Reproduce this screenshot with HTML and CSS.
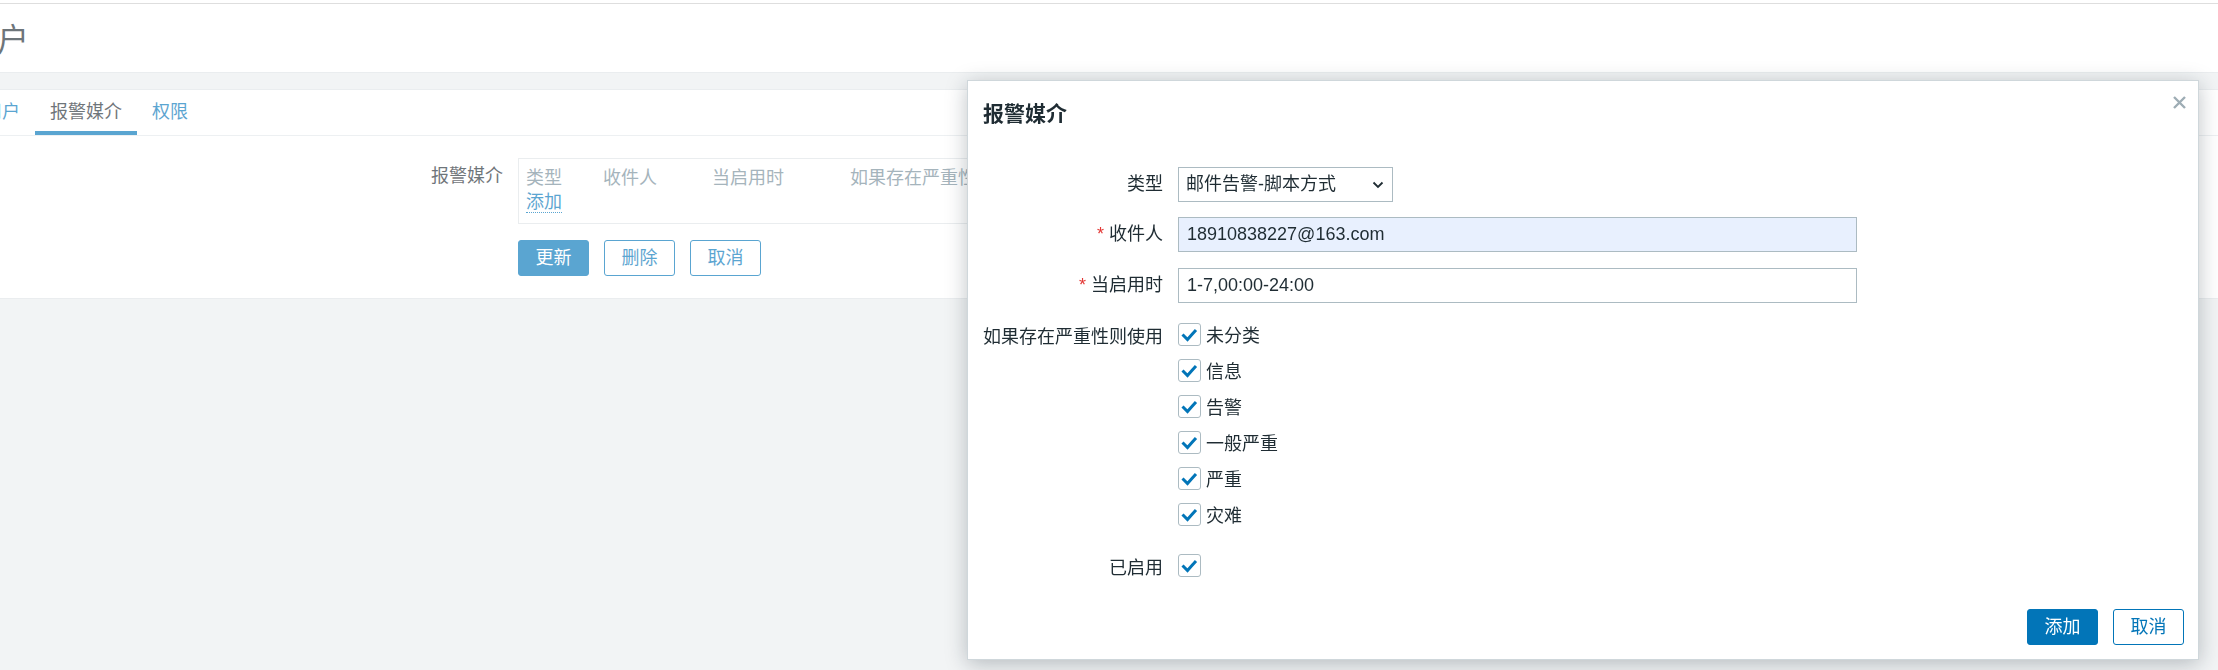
FILE: index.html
```html
<!DOCTYPE html>
<html lang="zh-CN">
<head>
<meta charset="utf-8">
<title>报警媒介</title>
<link rel="stylesheet" href="styles.css">
</head>
<body>
<div class="page">
  <div class="topline"></div>
  <header class="header">
    <h1 class="header-title">用户</h1>
  </header>
  <main class="content">
    <ul class="tabs">
      <li class="tab">用户</li>
      <li class="tab active">报警媒介</li>
      <li class="tab">权限</li>
    </ul>
    <div class="form">
      <div class="form-label">报警媒介</div>
      <div class="form-field">
        <div class="media-table">
          <div class="th">类型</div>
          <div class="th">收件人</div>
          <div class="th">当启用时</div>
          <div class="th">如果存在严重性则使用</div>
          <div class="td-add"><span class="link">添加</span></div>
        </div>
        <div class="buttons">
          <button class="btn btn-primary">更新</button>
          <button class="btn btn-alt">删除</button>
          <button class="btn btn-alt">取消</button>
        </div>
      </div>
    </div>
  </main>
</div>

<div class="overlay-bg"></div>

<div class="dialog">
  <div class="dialog-head">
    <h4 class="dialog-title">报警媒介</h4>
    <button class="dialog-close" aria-label="关闭">
      <svg width="15" height="15" viewBox="0 0 15 15"><path d="M2 2 L13 13 M13 2 L2 13" stroke="#9eadb5" stroke-width="2.4" fill="none"/></svg>
    </button>
  </div>
  <div class="dialog-form">
    <div class="frow r1">
      <div class="flabel">类型</div>
      <div class="select">
        <span>邮件告警-脚本方式</span>
        <svg width="12" height="8" viewBox="0 0 12 8"><polyline points="1.5,1.5 6,6 10.5,1.5" fill="none" stroke="#1f2c33" stroke-width="1.8"/></svg>
      </div>
    </div>
    <div class="frow r2">
      <div class="flabel"><span class="req">*</span>收件人</div>
      <input class="input autofill" type="text" value="18910838227@163.com">
    </div>
    <div class="frow r3">
      <div class="flabel"><span class="req">*</span>当启用时</div>
      <input class="input" type="text" value="1-7,00:00-24:00">
    </div>
    <div class="frow r4">
      <div class="flabel flabel-list">如果存在严重性则使用</div>
      <ul class="checklist">
        <li class="citem"><span class="cbox"><svg width="21" height="21" viewBox="0 0 21 21"><polyline points="3.5,10.5 8.5,15.5 17,6" fill="none" stroke="#0275b8" stroke-width="3"/></svg></span><span class="ctext">未分类</span></li>
        <li class="citem"><span class="cbox"><svg width="21" height="21" viewBox="0 0 21 21"><polyline points="3.5,10.5 8.5,15.5 17,6" fill="none" stroke="#0275b8" stroke-width="3"/></svg></span><span class="ctext">信息</span></li>
        <li class="citem"><span class="cbox"><svg width="21" height="21" viewBox="0 0 21 21"><polyline points="3.5,10.5 8.5,15.5 17,6" fill="none" stroke="#0275b8" stroke-width="3"/></svg></span><span class="ctext">告警</span></li>
        <li class="citem"><span class="cbox"><svg width="21" height="21" viewBox="0 0 21 21"><polyline points="3.5,10.5 8.5,15.5 17,6" fill="none" stroke="#0275b8" stroke-width="3"/></svg></span><span class="ctext">一般严重</span></li>
        <li class="citem"><span class="cbox"><svg width="21" height="21" viewBox="0 0 21 21"><polyline points="3.5,10.5 8.5,15.5 17,6" fill="none" stroke="#0275b8" stroke-width="3"/></svg></span><span class="ctext">严重</span></li>
        <li class="citem"><span class="cbox"><svg width="21" height="21" viewBox="0 0 21 21"><polyline points="3.5,10.5 8.5,15.5 17,6" fill="none" stroke="#0275b8" stroke-width="3"/></svg></span><span class="ctext">灾难</span></li>
      </ul>
    </div>
    <div class="frow r5">
      <div class="flabel flabel-list">已启用</div>
      <span class="cbox"><svg width="21" height="21" viewBox="0 0 21 21"><polyline points="3.5,10.5 8.5,15.5 17,6" fill="none" stroke="#0275b8" stroke-width="3"/></svg></span>
    </div>
  </div>
  <div class="dialog-foot">
    <button class="btn btn-main">添加</button>
    <button class="btn btn-cancel">取消</button>
  </div>
</div>
</body>
</html>
```

FILE: styles.css
```css
* { box-sizing: border-box; }

html, body {
  margin: 0;
  padding: 0;
}

body {
  width: 2218px;
  height: 670px;
  overflow: hidden;
  background: #ebeef0;
  font-family: "Liberation Sans", "Noto Sans CJK SC", sans-serif;
  font-size: 18px;
  color: #1f2c33;
}

/* ---------- background page ---------- */
.topline {
  height: 4px;
  background: #fff;
  border-bottom: 1px solid #cdcdcd;
}

.header {
  height: 69px;
  padding-top: 4px;
  background: #fff;
  border-bottom: 1px solid #dfe4e7;
  display: flex;
  align-items: center;
}

.header-title {
  margin: 0 0 0 -35px;
  font-size: 32px;
  font-weight: normal;
  line-height: 1;
  color: #1f2c33;
}

.content {
  margin-top: 16px;
  background: #fff;
  border-top: 1px solid #dfe4e7;
  border-bottom: 1px solid #dfe4e7;
}

.tabs {
  list-style: none;
  margin: 0 0 0 -31px;
  padding: 0;
  display: flex;
  border-bottom: 1px solid #e4e8eb;
}

.tab {
  padding: 10px 15px 7px;
  line-height: 24px;
  border-bottom: 4px solid transparent;
  color: #0275b8;
}

.tab.active {
  color: #1f2c33;
  border-bottom-color: #0275b8;
}

.form {
  display: grid;
  grid-template-columns: 503px auto;
  column-gap: 15px;
  padding: 22px 0;
}

.form-label {
  text-align: right;
  padding-top: 6px;
  line-height: 24px;
  color: #1f2c33;
}

.media-table {
  width: 900px;
  border: 1px solid #dfe4e7;
  padding: 7px 7px 8px;
  display: grid;
  grid-template-columns: 77px 109px 138px auto;
}

.th {
  line-height: 24px;
  color: #768d99;
  white-space: nowrap;
}

.td-add {
  grid-column: 1 / -1;
  line-height: 25px;
}

.link {
  color: #0275b8;
  border-bottom: 1px dotted #0275b8;
}

.buttons {
  display: flex;
  gap: 15px;
  margin-top: 16px;
}

.btn {
  height: 36px;
  padding: 0 16.5px;
  border-radius: 3px;
  font-family: inherit;
  font-size: 18px;
  line-height: 34px;
  border: 1px solid #0275b8;
  cursor: pointer;
}

.btn-primary {
  background: #0275b8;
  color: #fff;
}

.btn-alt {
  background: #fff;
  color: #0275b8;
}

/* ---------- modal ---------- */
.overlay-bg {
  position: fixed;
  inset: 0;
  background: rgba(255, 255, 255, 0.35);
}

.dialog {
  position: absolute;
  left: 967px;
  top: 80px;
  width: 1232px;
  height: 580px;
  background: #fff;
  border: 1px solid #cfd7db;
  box-shadow: 0 4px 20px rgba(20, 35, 45, 0.27);
  display: flex;
  flex-direction: column;
}

.dialog-head {
  padding: 18px 15px 0;
}

.dialog-title {
  margin: 0;
  font-size: 21px;
  font-weight: bold;
  line-height: 30px;
  color: #1f2c33;
}

.dialog-close {
  position: absolute;
  right: 11px;
  top: 14px;
  width: 15px;
  height: 15px;
  padding: 0;
  border: 0;
  background: none;
  display: flex;
}

.dialog-form {
  padding: 38px 15px 0;
}

.frow {
  display: flex;
  align-items: flex-start;
}

.r1, .r2 { height: 35px; }
.r1 { margin-bottom: 15px; }
.r2 { margin-bottom: 16px; }
.r3 { height: 35px; margin-bottom: 20px; }
.r4 { margin-bottom: 28px; }

.flabel {
  width: 180px;
  margin-right: 15px;
  text-align: right;
  line-height: 35px;
  white-space: nowrap;
  color: #1f2c33;
}

.flabel-list {
  line-height: 24px;
  padding-top: 2px;
}

.req {
  color: #e33734;
  margin-right: 5px;
}

.select {
  width: 215px;
  height: 35px;
  border: 1px solid #acbbc2;
  background: #fff;
  padding: 0 8px 0 7px;
  display: flex;
  align-items: center;
  justify-content: space-between;
  line-height: 33px;
}

.input {
  width: 679px;
  height: 35px;
  margin: 0;
  border: 1px solid #acbbc2;
  border-radius: 0;
  padding: 0 8px;
  font-family: "Liberation Sans", "Noto Sans CJK SC", sans-serif;
  font-size: 18px;
  color: #1f2c33;
  background: #fff;
  outline: none;
}

.input.autofill {
  background: #e8f0fe;
}

.checklist {
  list-style: none;
  margin: 0;
  padding: 0;
  display: flex;
  flex-direction: column;
  gap: 13px;
}

.citem {
  display: flex;
  align-items: flex-start;
  gap: 5px;
  height: 23px;
}

.ctext {
  line-height: 23px;
  padding-top: 2px;
}

.cbox {
  width: 23px;
  height: 23px;
  border: 1px solid #acbbc2;
  border-radius: 3px;
  background: #fff;
  display: flex;
  flex: none;
}

.dialog-foot {
  margin-top: auto;
  padding: 0 14px 14px;
  display: flex;
  justify-content: flex-end;
  gap: 15px;
}

.btn-main {
  background: #0275b8;
  color: #fff;
}

.btn-cancel {
  background: #fff;
  color: #0275b8;
}
```
